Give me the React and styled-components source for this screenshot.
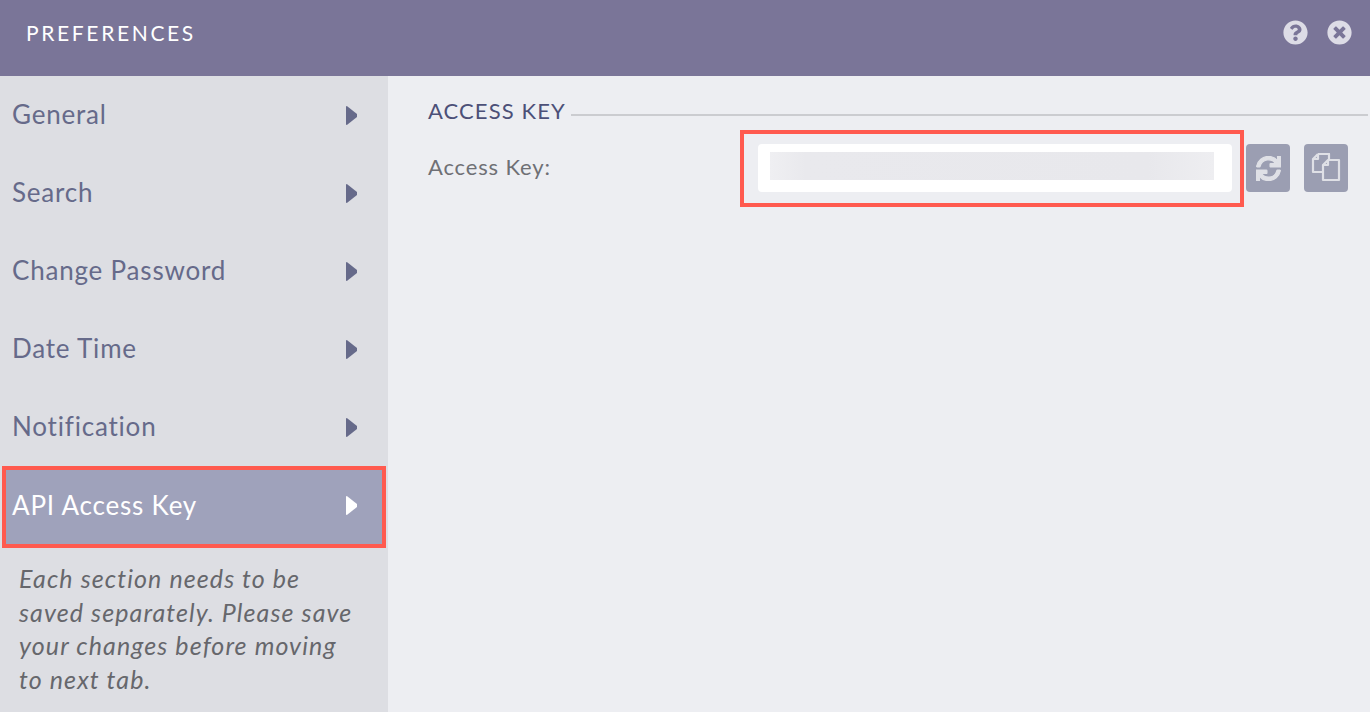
import React from 'react';
import styled, { createGlobalStyle } from 'styled-components';
import { FaQuestionCircle, FaTimesCircle, FaSync } from 'react-icons/fa';

const GlobalStyle = createGlobalStyle`
  html, body {
    margin: 0;
    padding: 0;
    height: 100%;
    overflow: hidden;
    background: #edeef2;
    font-family: Lato, "Open Sans", "Liberation Sans", sans-serif;
  }
`;

const Page = styled.div`
  width: 1370px;
  height: 712px;
  display: flex;
  flex-direction: column;
`;

const Header = styled.header`
  height: 76px;
  flex: none;
  background: #7a7598;
  display: flex;
  align-items: center;
  justify-content: space-between;
  padding: 0 18px 12px 26px;
  box-sizing: border-box;
`;

const Title = styled.h1`
  margin: 0;
  font-size: 21px;
  font-weight: 400;
  letter-spacing: 2.65px;
  color: #fff;
`;

const HeaderIcons = styled.div`
  display: flex;
  gap: 19px;
  color: #dddce6;
  font-size: 25px;
  line-height: 0;
`;

const Body = styled.div`
  flex: 1;
  display: flex;
  min-height: 0;
`;

const Sidebar = styled.nav`
  width: 388px;
  flex: none;
  background: #dddee3;
`;

const Item = styled.div`
  height: ${p => (p.$active ? 82 : 78)}px;
  box-sizing: border-box;
  display: flex;
  align-items: center;
  justify-content: space-between;
  padding: ${p => (p.$active ? '0 25px 0 6px' : '0 31px 0 12px')};
  margin: ${p => (p.$active ? '0 2px' : '0')};
  border: ${p => (p.$active ? '4px solid #ff5a4f' : 'none')};
  background: ${p => (p.$active ? '#9fa2bb' : 'transparent')};
  color: ${p => (p.$active ? '#fff' : '#666a8a')};
  font-size: 26px;
  letter-spacing: 0.8px;
`;

const ItemLabel = styled.span`
  margin-bottom: ${p => (p.$active ? 5 : 2)}px;
`;

const Arrow = styled.svg`
  width: 11px;
  height: 19px;
  display: block;
  fill: currentColor;
  margin-bottom: ${p => (p.$active ? 3 : 0)}px;
`;

const Note = styled.p`
  margin: 0;
  padding: 14px 30px 0 19px;
  font-size: 25px;
  font-style: italic;
  line-height: 33.5px;
  letter-spacing: 1.1px;
  color: #66676c;
`;

const Main = styled.main`
  flex: 1;
  padding: 22px 2px 0 40px;
  background: #edeef2;
`;

const SectionHead = styled.div`
  display: flex;
  align-items: center;
  gap: 5px;
  height: 26px;
`;

const SectionTitle = styled.h2`
  margin: 0 0 2px;
  font-size: 22px;
  font-weight: 400;
  letter-spacing: 1.1px;
  color: #4c5078;
`;

const Rule = styled.div`
  flex: 1;
  height: 2px;
  margin-top: 8px;
  background: #cbccd0;
`;

const FieldRow = styled.div`
  display: flex;
  align-items: flex-start;
  margin-top: 6px;
`;

const Label = styled.label`
  width: 312px;
  flex: none;
  margin-top: 19px;
  font-size: 22px;
  line-height: 36px;
  letter-spacing: 0.85px;
  color: #6f7075;
`;

const Highlight = styled.div`
  width: 504px;
  height: 77px;
  flex: none;
  box-sizing: border-box;
  border: 4px solid #ff5a4f;
  padding: 10px 8px 11px 14px;
`;

const KeyBox = styled.div`
  height: 48px;
  box-sizing: border-box;
  background: #fff;
  border-radius: 4px;
  padding: 8px 18px 12px 12px;
`;

const Redacted = styled.div`
  height: 28px;
  background: linear-gradient(90deg, #efeff2 0%, #e9e9ed 8%, #e8e8ec 85%, #eeeef1 100%);
`;

const IconButton = styled.div`
  width: 44px;
  height: 48px;
  flex: none;
  margin-top: 14px;
  margin-left: ${p => p.$gap}px;
  border-radius: 4px;
  background: #9b9eb2;
  color: #dfe0e6;
  display: flex;
  align-items: center;
  justify-content: center;
  font-size: 25px;
`;

const SyncIcon = styled(FaSync)`
  stroke: currentColor;
  stroke-width: 24px;
`;

const CopyIcon = styled.svg`
  width: 30px;
  height: 30px;
  fill: none;
  stroke: currentColor;
  stroke-width: 2.2;
  stroke-linejoin: round;
`;

const menu = ['General', 'Search', 'Change Password', 'Date Time', 'Notification', 'API Access Key'];

export default function App() {
  return (
    <Page>
      <GlobalStyle />
      <Header>
        <Title>PREFERENCES</Title>
        <HeaderIcons>
          <FaQuestionCircle />
          <FaTimesCircle />
        </HeaderIcons>
      </Header>
      <Body>
        <Sidebar>
          {menu.map(name => {
            const active = name === 'API Access Key';
            return (
              <Item key={name} $active={active}>
                <ItemLabel $active={active}>{name}</ItemLabel>
                <Arrow $active={active} viewBox="0 0 11 19">
                  <path d="M1.2 0.2 L11 8 L11 11 L1.2 18.8 Q0 19.2 0 18 L0 1 Q0 -0.2 1.2 0.2 Z" />
                </Arrow>
              </Item>
            );
          })}
          <Note>Each section needs to be saved separately. Please save your changes before moving to next tab.</Note>
        </Sidebar>
        <Main>
          <SectionHead>
            <SectionTitle>ACCESS KEY</SectionTitle>
            <Rule />
          </SectionHead>
          <FieldRow>
            <Label>Access Key:</Label>
            <Highlight>
              <KeyBox>
                <Redacted />
              </KeyBox>
            </Highlight>
            <IconButton $gap={2}>
              <SyncIcon />
            </IconButton>
            <IconButton $gap={14}>
              <CopyIcon viewBox="0 0 30 30">
                <path d="M7 1 H18 V8 M7 1 L2 6 V19 H11 M7 1 V6 H2" />
                <path d="M17 7 H28 V27 H12 V12 Z M17 7 V12 H12" fill="#9b9eb2" />
              </CopyIcon>
            </IconButton>
          </FieldRow>
        </Main>
      </Body>
    </Page>
  );
}
